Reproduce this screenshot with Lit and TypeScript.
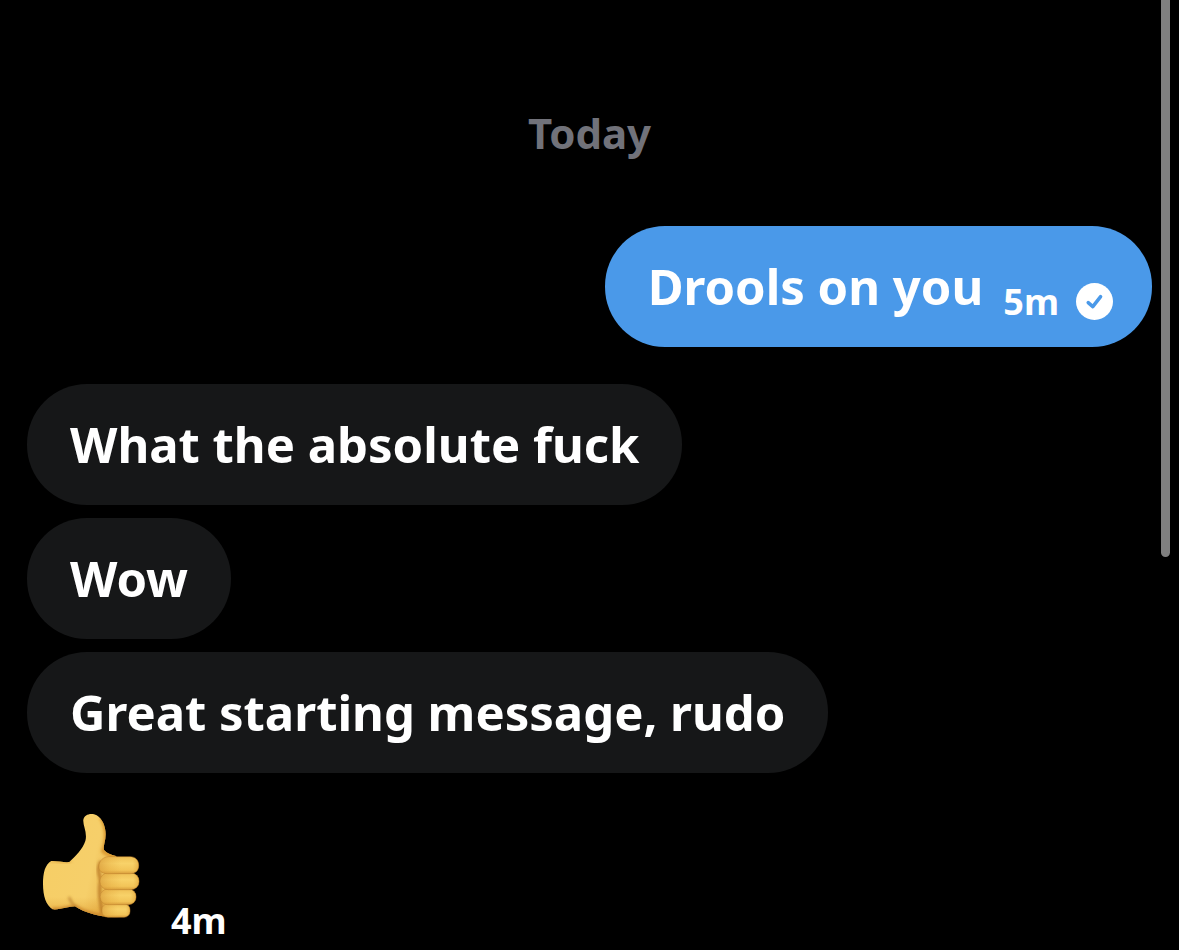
import { LitElement, html, css, svg } from "lit";
import { customElement, property } from "lit/decorators.js";

interface Message {
  text: string;
  mine?: boolean;
  time?: string;
}

const messages: Message[] = [
  { text: "Drools on you", mine: true, time: "5m" },
  { text: "What the absolute fuck" },
  { text: "Wow" },
  { text: "Great starting message, rudo" },
];

const sentIcon = svg`
  <svg class="sent" viewBox="0 0 37 37" role="img" aria-label="Sent">
    <circle cx="18.5" cy="18.5" r="18.5" fill="#fff" />
    <path d="M12.2 19.6 L16.8 23.6 L24.6 13.6" fill="none" stroke="#4a99e9" stroke-width="3.5" stroke-linecap="round" stroke-linejoin="round" />
  </svg>`;

const thumbsUp = svg`
  <svg class="emoji" viewBox="66 40 294 318" role="img" aria-label="Thumbs up">
    <defs>
      <linearGradient id="hand" x1="0" y1="0" x2="1" y2="0.25">
        <stop offset="0" stop-color="#efbc4a" />
        <stop offset="0.14" stop-color="#f6ce66" />
        <stop offset="0.6" stop-color="#f6cf6a" />
        <stop offset="1" stop-color="#e6ac42" />
      </linearGradient>
      <linearGradient id="finger" x1="0" y1="0" x2="0" y2="1">
        <stop offset="0" stop-color="#efc055" />
        <stop offset="0.4" stop-color="#f8d269" />
        <stop offset="0.8" stop-color="#f2c458" />
        <stop offset="1" stop-color="#d99e3c" />
      </linearGradient>
      <linearGradient id="base" x1="0" y1="0" x2="0" y2="1">
        <stop offset="0.65" stop-color="#dc982c" stop-opacity="0" />
        <stop offset="1" stop-color="#dc982c" stop-opacity="0.65" />
      </linearGradient>
      <linearGradient id="side" x1="0" y1="0" x2="1" y2="0">
        <stop offset="0" stop-color="#d08e30" stop-opacity="0.55" />
        <stop offset="0.3" stop-color="#e0a23a" stop-opacity="0.25" />
        <stop offset="0.55" stop-color="#e0a23a" stop-opacity="0" />
        <stop offset="0.85" stop-color="#e0a23a" stop-opacity="0" />
        <stop offset="1" stop-color="#d8942c" stop-opacity="0.5" />
      </linearGradient>
      <filter id="soft" x="-50%" y="-50%" width="200%" height="200%">
        <feGaussianBlur stdDeviation="5" />
      </filter>
      <clipPath id="outline">
        <path d="M94 184 C112 183 133 189 148 187 C166 170 188 149 196 124 C203 100 188 76 190 60 C193 44 214 38 230 47 C247 57 257 81 257 104 C257 125 249 139 252 151 C261 161 273 165 288 169 L300 200 L300 352 C270 355 238 349 220 344 C198 338 178 330 165 320 C147 320 121 331 98 329 C78 317 69 289 69 253 C69 219 75 195 94 184 Z" />
      </clipPath>
    </defs>
    <g clip-path="url(#outline)">
      <path d="M66 40 H360 V358 H66 Z" fill="url(#hand)" />
      <path d="M66 170 H360 V358 H66 Z" fill="url(#base)" />
      <path d="M243 52 C260 80 263 120 249 154 C262 168 280 170 300 172" fill="none" stroke="#d8942c" stroke-width="11" filter="url(#soft)" />
      <path d="M88 184 C120 183 136 194 154 184" fill="none" stroke="#dfa139" stroke-width="5" filter="url(#soft)" />
      <path d="M147 292 C152 305 158 315 168 323" fill="none" stroke="#b97c2b" stroke-width="6" filter="url(#soft)" />
      <path d="M96 329 C125 332 147 321 166 321 C187 335 214 345 265 351" fill="none" stroke="#cb8629" stroke-width="10" filter="url(#soft)" />
      <path d="M243 184 C229 212 239 222 242 245 C234 274 242 299 246 343" fill="none" stroke="#bd7d28" stroke-width="10" filter="url(#soft)" />
    </g>
    <g stroke="#b97c2b" stroke-width="1.5">
      <rect x="246" y="312" width="84" height="41" rx="18" fill="url(#finger)" />
      <rect x="246" y="312" width="84" height="41" rx="18" fill="url(#side)" stroke="none" />
      <rect x="241" y="268" width="107" height="47" rx="22" fill="url(#finger)" />
      <rect x="241" y="268" width="107" height="47" rx="22" fill="url(#side)" stroke="none" />
      <rect x="240" y="220" width="117" height="50" rx="24" fill="url(#finger)" />
      <rect x="240" y="220" width="117" height="50" rx="24" fill="url(#side)" stroke="none" />
      <path d="M266 171 H330 C347 171 356 182 356 197 C356 213 347 222 330 222 H262 C244 222 236 212 237 199 C238 183 249 172 266 171 Z" fill="url(#finger)" />
      <path d="M266 171 H330 C347 171 356 182 356 197 C356 213 347 222 330 222 H262 C244 222 236 212 237 199 C238 183 249 172 266 171 Z" fill="url(#side)" stroke="none" />
    </g>
  </svg>`;

@customElement("chat-bubble")
export class ChatBubble extends LitElement {
  @property({ attribute: false }) message!: Message;

  static styles = css`
    :host {
      display: block;
    }
    .bubble {
      display: flex;
      align-items: flex-start;
      padding: 32px 43px;
      border-radius: 60px;
      background: #161718;
      color: #fff;
      font-size: 49px;
      line-height: 57px;
    }
    .mine {
      padding: 32px 39px 27px 43px;
      background: #4a99e9;
    }
    .text {
      margin: 0;
      overflow-wrap: anywhere;
    }
    .mine .text {
      margin-bottom: 5px;
    }
    .meta {
      display: flex;
      align-items: center;
      align-self: flex-end;
      gap: 17px;
      margin-left: 20px;
      font-size: 36px;
      line-height: 36px;
    }
    .sent {
      display: block;
      width: 37px;
      height: 37px;
    }
  `;

  render() {
    const { text, mine, time } = this.message;
    return html`
      <div class="bubble ${mine ? "mine" : ""}">
        <p class="text">${text}</p>
        ${time ? html`<div class="meta"><time>${time}</time>${sentIcon}</div>` : ""}
      </div>
    `;
  }
}

@customElement("app-root")
export class AppRoot extends LitElement {
  static styles = css`
    :host {
      display: block;
      position: relative;
      box-sizing: border-box;
      min-height: 100vh;
      padding: 103px 27px 0;
      background: #000;
      color: #fff;
      font-family: "Noto Sans", "Open Sans", sans-serif;
      font-weight: 740;
    }
    .day {
      margin: 0 0 63px;
      color: #71727a;
      font-size: 42px;
      font-weight: 740;
      line-height: 60px;
      text-align: center;
    }
    .thread {
      display: flex;
      flex-direction: column;
      align-items: flex-start;
      gap: 13px;
    }
    .mine {
      align-self: flex-end;
      margin-bottom: 24px;
    }
    .reaction {
      display: flex;
      align-items: flex-end;
      gap: 31px;
      padding: 27px 15px 0;
    }
    .emoji {
      display: block;
      width: 98px;
      height: 106px;
      margin-bottom: 20px;
    }
    .time {
      font-size: 36px;
      line-height: 36px;
    }
    .scrollbar {
      position: absolute;
      top: 0;
      right: 9px;
      width: 9px;
      height: 557px;
      border-radius: 0 0 5px 5px;
      background: #808080;
    }
  `;

  render() {
    return html`
      <h2 class="day">Today</h2>
      <div class="thread">
        ${messages.map(
          (m) => html`<chat-bubble class=${m.mine ? "mine" : "theirs"} .message=${m}></chat-bubble>`
        )}
        <div class="reaction">${thumbsUp}<time class="time">4m</time></div>
      </div>
      <div class="scrollbar"></div>
    `;
  }
}
